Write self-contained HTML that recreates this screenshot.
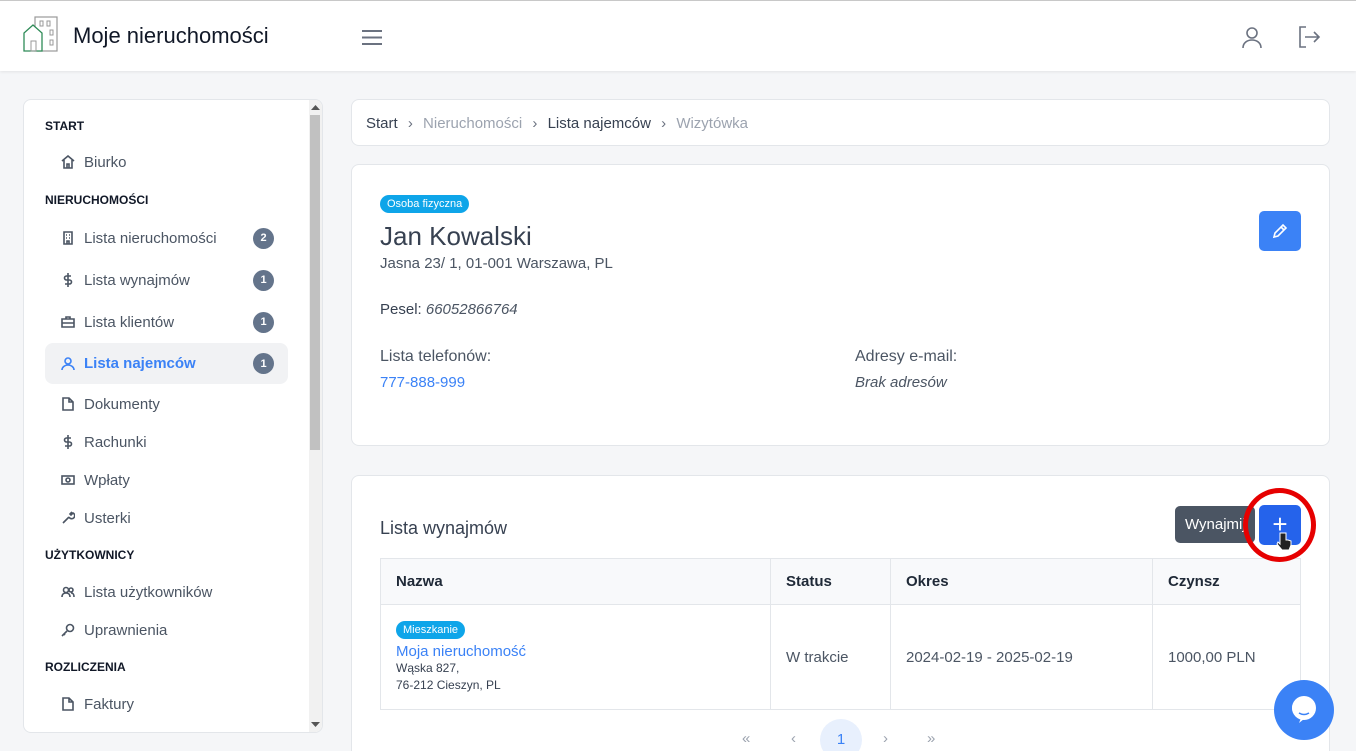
<!DOCTYPE html>
<html style="height:751px;overflow:hidden"><head><meta charset="utf-8">
<style>
*{box-sizing:border-box;margin:0;padding:0}
body{width:1356px;height:751px;overflow:hidden;background:#f5f6f8;font-family:"Liberation Sans",sans-serif;color:#4b5563;position:relative}
.hdr{position:absolute;left:0;top:0;width:1356px;height:71px;background:#fff;border-top:1px solid #c8c8c8;box-shadow:0 1px 3px rgba(0,0,0,.08)}
.card{position:absolute;background:#fff;border:1px solid #e3e6ea;border-radius:8px}
.sb .sec{position:absolute;left:21px;font-size:12px;font-weight:bold;color:#111827}
.sb .it{position:absolute;left:21px;width:243px;height:40px;font-size:15px;color:#4b5563;display:flex;align-items:center;padding-left:16px}
.sb .it svg{width:14px;height:14px;margin-right:9px;stroke:#4b5563;fill:none;stroke-width:1.6}
.badge{position:absolute;right:14px;width:21px;height:21px;border-radius:50%;background:#64748b;color:#fff;font-size:11px;font-weight:bold;display:flex;align-items:center;justify-content:center}
.pill{display:inline-block;background:#0ea5e9;color:#fff;font-size:11px;border-radius:10px;padding:3px 7px}
table{border-collapse:collapse;position:absolute;left:380px;top:558px;width:921px}
td,th{border:1px solid #e3e6ea;text-align:left;padding-left:15px;font-size:15px}
th{height:46px;background:#f8f9fb;color:#1f2937}
</style></head><body>
<div class="hdr">
<svg style="position:absolute;left:22px;top:15px" width="37" height="37" viewBox="0 0 37 37"><rect x="13" y="1" width="22" height="34" fill="none" stroke="#999" stroke-width="1.2"/><rect x="18" y="5" width="3" height="5" fill="none" stroke="#999"/><rect x="25" y="5" width="3" height="5" fill="none" stroke="#999"/><rect x="28" y="14" width="3" height="5" fill="none" stroke="#999"/><rect x="28" y="24" width="3" height="5" fill="none" stroke="#999"/><path d="M2 35V17L11 9L20 17V35Z" fill="#fff" stroke="#2e8b57" stroke-width="1.3"/><rect x="9" y="25" width="5" height="10" fill="none" stroke="#999"/></svg>
<div style="position:absolute;left:73px;top:22px;font-size:22px;color:#111827">Moje nieruchomości</div>
<svg style="position:absolute;left:361px;top:28px" width="22" height="17"><path d="M1 2h20M1 8.5h20M1 15h20" stroke="#6b7280" stroke-width="2"/></svg>
<svg style="position:absolute;left:1240px;top:24px" width="24" height="24" fill="none" stroke="#6b7280" stroke-width="1.6"><circle cx="12" cy="8" r="5"/><path d="M3 23c0-5 4-8 9-8s9 3 9 8"/></svg>
<svg style="position:absolute;left:1297px;top:25px" width="24" height="22" fill="none" stroke="#6b7280" stroke-width="1.6"><path d="M9 1H3v20h6M8 11h14M17 6l5 5-5 5"/></svg>
</div>
<div class="card sb" style="left:23px;top:99px;width:300px;height:634px;overflow:hidden">
<div style="position:absolute;right:0;top:0;width:13px;height:634px;background:#f1f1f1"></div>
<div style="position:absolute;right:2px;top:15px;width:10px;height:335px;background:#c1c1c1"></div>
<div class="sec" style="top:19px">START</div>
<div class="it" style="top:42px"><svg viewBox="0 0 14 14"><path d="M1 6L7 1l6 5M3 5v8h8V5M6 13V9h2v4"/></svg>Biurko</div>
<div class="sec" style="top:93px">NIERUCHOMOŚCI</div>
<div class="it" style="top:118px"><svg viewBox="0 0 14 14"><path d="M3 1h8v12H3zM5 4h1M8 4h1M5 7h1M8 7h1M6 13v-3h2v3"/></svg>Lista nieruchomości<span class="badge">2</span></div>
<div class="it" style="top:160px"><svg viewBox="0 0 14 14"><path d="M7 0v14M10 3H5.5a2 2 0 000 4h3a2 2 0 010 4H4"/></svg>Lista wynajmów<span class="badge">1</span></div>
<div class="it" style="top:202px"><svg viewBox="0 0 14 14"><path d="M1 4h12v8H1zM5 4V2h4v2M1 8h12"/></svg>Lista klientów<span class="badge">1</span></div>
<div class="it" style="top:243px;height:41px;background:#f1f2f4;border-radius:8px;color:#3b82f6;font-weight:bold"><svg viewBox="0 0 14 14" style="stroke:#3b82f6"><circle cx="7" cy="4" r="3"/><path d="M1 13c0-3 3-5 6-5s6 2 6 5"/></svg>Lista najemców<span class="badge">1</span></div>
<div class="it" style="top:284px"><svg viewBox="0 0 14 14"><path d="M2 1h6l4 4v8H2zM8 1v4h4"/></svg>Dokumenty</div>
<div class="it" style="top:322px"><svg viewBox="0 0 14 14"><path d="M7 0v14M10 3H5.5a2 2 0 000 4h3a2 2 0 010 4H4"/></svg>Rachunki</div>
<div class="it" style="top:360px"><svg viewBox="0 0 14 14"><rect x="1" y="3" width="12" height="8"/><circle cx="7" cy="7" r="2"/></svg>Wpłaty</div>
<div class="it" style="top:398px"><svg viewBox="0 0 14 14"><path d="M2 12l6-6M8 6a3 3 0 104-4l-2 2-1-1 2-2"/></svg>Usterki</div>
<div class="sec" style="top:448px">UŻYTKOWNICY</div>
<div class="it" style="top:472px"><svg viewBox="0 0 14 14"><circle cx="5" cy="5" r="2.5"/><circle cx="10" cy="5" r="2"/><path d="M1 12c0-3 2-4 4-4s4 1 4 4M10 8c2 0 3 1 3 4"/></svg>Lista użytkowników</div>
<div class="it" style="top:510px"><svg viewBox="0 0 14 14"><circle cx="9" cy="5" r="3.5"/><path d="M6 8l-5 5M3 11l1 1"/></svg>Uprawnienia</div>
<div class="sec" style="top:560px">ROZLICZENIA</div>
<div class="it" style="top:584px"><svg viewBox="0 0 14 14"><path d="M2 1h6l4 4v8H2zM8 1v4h4"/></svg>Faktury</div>
<svg style="position:absolute;right:2px;top:4px" width="9" height="6"><path d="M0 6L4.5 1 9 6z" fill="#555"/></svg>
<svg style="position:absolute;right:2px;bottom:4px" width="9" height="6"><path d="M0 0L4.5 5 9 0z" fill="#555"/></svg>
</div>
<div class="card" style="left:351px;top:99px;width:979px;height:47px;font-size:15px;padding:15px 14px">
<span style="color:#374151">Start</span> <span style="color:#6b7280;margin:0 6px">›</span> <span style="color:#9ca3af">Nieruchomości</span> <span style="color:#6b7280;margin:0 6px">›</span> <span style="color:#374151">Lista najemców</span> <span style="color:#6b7280;margin:0 6px">›</span> <span style="color:#9ca3af">Wizytówka</span>
</div>
<div class="card" style="left:351px;top:164px;width:979px;height:282px">
<div style="position:absolute;left:28px;top:29px"><span class="pill">Osoba fizyczna</span></div>
<div style="position:absolute;left:28px;top:56px;font-size:26px;color:#374151">Jan Kowalski</div>
<div style="position:absolute;left:28px;top:90px;font-size:15px">Jasna 23/ 1, 01-001 Warszawa, PL</div>
<div style="position:absolute;left:28px;top:136px;font-size:15px;color:#374151">Pesel: <i style="color:#4b5563">66052866764</i></div>
<div style="position:absolute;left:28px;top:183px;font-size:16px">Lista telefonów:</div>
<div style="position:absolute;left:28px;top:209px;font-size:15px;color:#3b82f6">777-888-999</div>
<div style="position:absolute;left:503px;top:183px;font-size:16px">Adresy e-mail:</div>
<div style="position:absolute;left:503px;top:209px;font-size:15px;font-style:italic">Brak adresów</div>
<div style="position:absolute;left:907px;top:46px;width:42px;height:40px;background:#3b82f6;border-radius:5px"><svg style="margin:12px 0 0 13px" width="16" height="16" fill="none" stroke="#fff" stroke-width="1.6"><path d="M2 14l1-4 8-8 3 3-8 8zM9 4l3 3"/></svg></div>
</div>
<div class="card" style="left:351px;top:475px;width:979px;height:290px">
<div style="position:absolute;left:28px;top:42px;font-size:18px;color:#374151">Lista wynajmów</div>
<div style="position:absolute;left:823px;top:30px;width:80px;height:37px;background:#4b5563;border-radius:5px;color:#fff;font-size:15px;padding:10px 10px;overflow:hidden;white-space:nowrap">Wynajmij</div>
<div style="position:absolute;left:907px;top:29px;width:42px;height:40px;background:#2563eb;border-radius:5px;color:#fff;font-size:26px;text-align:center;line-height:38px;font-weight:300">+</div>
</div>
<table>
<tr><th style="width:390px">Nazwa</th><th style="width:120px">Status</th><th style="width:262px">Okres</th><th>Czynsz</th></tr>
<tr style="height:105px"><td><span class="pill">Mieszkanie</span><div style="color:#3b82f6;font-size:15px;margin-top:4px">Moja nieruchomość</div><div style="font-size:12px;line-height:17px;color:#374151">Wąska 827,<br>76-212 Cieszyn, PL</div></td><td>W trakcie</td><td>2024-02-19 - 2025-02-19</td><td>1000,00 PLN</td></tr>
</table>
<div style="position:absolute;left:1243px;top:488px;width:73px;height:74px;border:5px solid #e60000;border-radius:50%;z-index:5"></div>
<svg style="position:absolute;left:1276px;top:532px;z-index:6" width="16" height="20"><path d="M4 1v11l-2-2-1 2 5 6h7l2-5v-4l-3-1-2 0V1z" fill="#222" stroke="#fff" stroke-width="1"/></svg>
<div style="position:absolute;left:742px;top:730px;font-size:15px;color:#9ca3af">«</div>
<div style="position:absolute;left:791px;top:730px;font-size:15px;color:#9ca3af">‹</div>
<div style="position:absolute;left:820px;top:719px;width:42px;height:42px;border-radius:50%;background:#e8f0fd;color:#3b82f6;text-align:center;line-height:42px;font-size:15px">1</div>
<div style="position:absolute;left:883px;top:730px;font-size:15px;color:#9ca3af">›</div>
<div style="position:absolute;left:927px;top:730px;font-size:15px;color:#9ca3af">»</div>
<div style="position:absolute;left:1274px;top:680px;width:60px;height:60px;border-radius:50%;background:#3b82f6;z-index:7"><svg style="margin:15px 0 0 15px" width="30" height="30"><path d="M15 2a12 11 0 100 22l-5 4 2-5" fill="#fff"/><circle cx="15" cy="13" r="12" fill="#fff"/><path d="M10 18q5 3 10 0" stroke="#3b82f6" stroke-width="1.6" fill="none"/></svg></div>
</body></html>
